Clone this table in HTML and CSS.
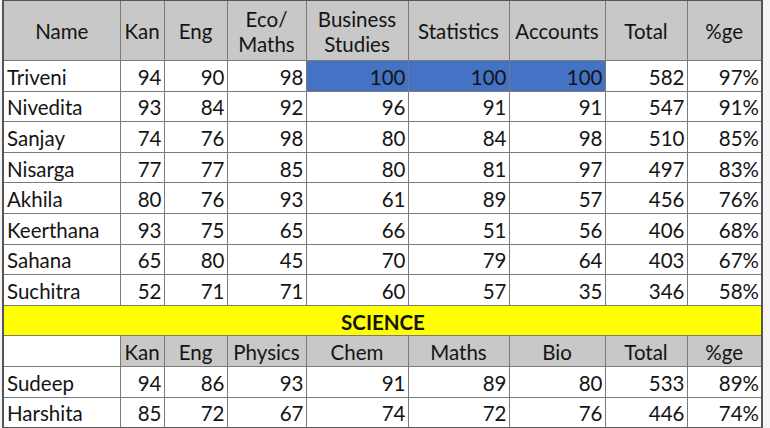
FILE: index.html
```html
<!DOCTYPE html>
<html>
<head>
<meta charset="utf-8">
<link rel="stylesheet" href="styles.css">
</head>
<body>
<div class="sheet">
<table class="marks">
  <colgroup>
    <col class="c-name"><col class="c-kan"><col class="c-eng"><col class="c-eco"><col class="c-bus"><col class="c-stat"><col class="c-acc"><col class="c-tot"><col class="c-pct">
  </colgroup>
  <tr class="head">
    <th>Name</th><th>Kan</th><th>Eng</th><th>Eco/<br>Maths</th><th>Business<br>Studies</th><th>Statistics</th><th>Accounts</th><th>Total</th><th>%ge</th>
  </tr>
  <tr><td class="nm">Triveni</td><td>94</td><td>90</td><td>98</td><td class="hl">100</td><td class="hl">100</td><td class="hl">100</td><td>582</td><td>97%</td></tr>
  <tr><td class="nm">Nivedita</td><td>93</td><td>84</td><td>92</td><td>96</td><td>91</td><td>91</td><td>547</td><td>91%</td></tr>
  <tr><td class="nm">Sanjay</td><td>74</td><td>76</td><td>98</td><td>80</td><td>84</td><td>98</td><td>510</td><td>85%</td></tr>
  <tr><td class="nm">Nisarga</td><td>77</td><td>77</td><td>85</td><td>80</td><td>81</td><td>97</td><td>497</td><td>83%</td></tr>
  <tr><td class="nm">Akhila</td><td>80</td><td>76</td><td>93</td><td>61</td><td>89</td><td>57</td><td>456</td><td>76%</td></tr>
  <tr><td class="nm">Keerthana</td><td>93</td><td>75</td><td>65</td><td>66</td><td>51</td><td>56</td><td>406</td><td>68%</td></tr>
  <tr><td class="nm">Sahana</td><td>65</td><td>80</td><td>45</td><td>70</td><td>79</td><td>64</td><td>403</td><td>67%</td></tr>
  <tr><td class="nm">Suchitra</td><td>52</td><td>71</td><td>71</td><td>60</td><td>57</td><td>35</td><td>346</td><td>58%</td></tr>
  <tr class="section"><td colspan="9">SCIENCE</td></tr>
  <tr class="subhead">
    <td class="blank"></td><th>Kan</th><th>Eng</th><th>Physics</th><th>Chem</th><th>Maths</th><th>Bio</th><th>Total</th><th>%ge</th>
  </tr>
  <tr><td class="nm">Sudeep</td><td>94</td><td>86</td><td>93</td><td>91</td><td>89</td><td>80</td><td>533</td><td>89%</td></tr>
  <tr><td class="nm">Harshita</td><td>85</td><td>72</td><td>67</td><td>74</td><td>72</td><td>76</td><td>446</td><td>74%</td></tr>
</table>
</div>
</body>
</html>
```
FILE: styles.css
```css
html, body {
  margin: 0;
  padding: 0;
  background: #f4f4f4;
  overflow: hidden;
}
.sheet {
  padding-left: 2px;
  margin-top: -1px;
}
.marks {
  border-collapse: collapse;
  table-layout: fixed;
  width: 761px;
  font-family: "Lato", "Liberation Sans", sans-serif;
  font-size: 20.5px;
  color: #141414;
  background: #fff;
  border: 2px solid #555;
}
.c-name { width: 117px; }
.c-kan { width: 44px; }
.c-eng { width: 63px; }
.c-eco { width: 79px; }
.c-bus { width: 102px; }
.c-stat { width: 101px; }
.c-acc { width: 96px; }
.c-tot { width: 82px; }
.c-pct { width: 75px; }
.marks td, .marks th {
  border: 1px solid #7a7a7a;
  padding: 2px 2px 0 3px;
  height: 27.6px;
  line-height: 22px;
  white-space: nowrap;
  overflow: hidden;
}
.marks td { text-align: right; }
.marks td.nm { text-align: left; }
.marks th {
  font-weight: normal;
  text-align: center;
  background: #c8c8c8;
  padding: 2px 0 0;
}
.head th {
  height: 57px;
  line-height: 25px;
}
.marks td.hl { background: #4472c4; }
.section td {
  background: #ffff00;
  text-align: center;
  font-weight: bold;
}
.subhead td.blank { background: #fff; }
```
